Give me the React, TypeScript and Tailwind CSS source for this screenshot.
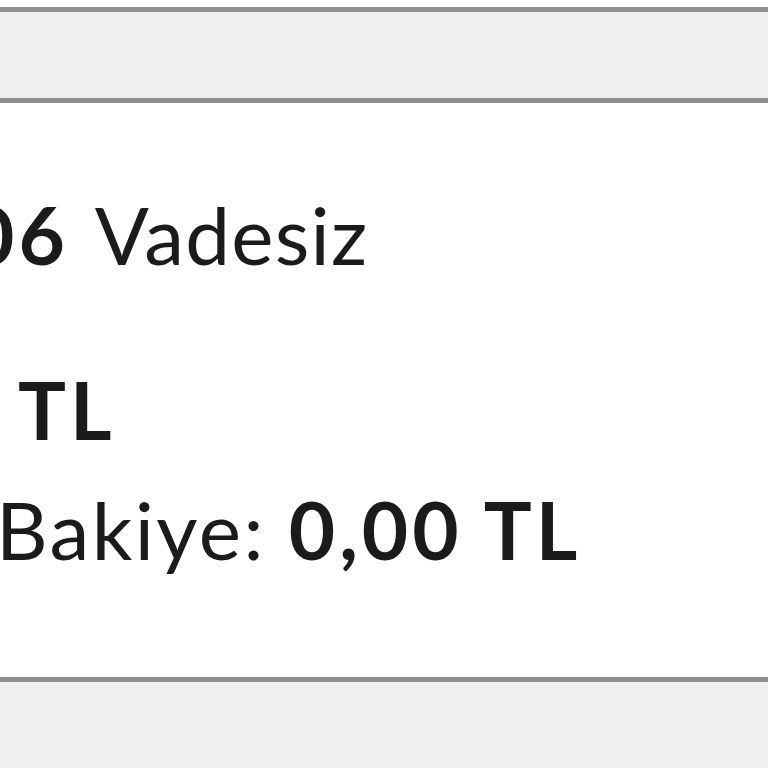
export default function App() {
  return (
    <div className="w-[768px] h-[768px] overflow-hidden bg-white text-[#1b1b1b]" style={{ fontFamily: 'Lato, "Noto Sans", sans-serif' }}>
      {/* top strip */}
      <div className="h-[7px] bg-white" />
      <div className="h-[96px] bg-[#efefef] border-y-[5px] border-[#8f8f8f]" />

      {/* account card */}
      <div className="h-[574px] pt-[91px] text-[80px] leading-[80px] whitespace-nowrap tracking-[0.03em]">
        <div className="ml-[-32px] flex gap-[26px]">
          <span className="font-bold tracking-[0.05em]">06</span>
          <span className="tracking-[0.015em]">Vadesiz</span>
        </div>
        <div className="mt-[95px] ml-[-177px] font-bold tracking-[0.05em]">0,00 TL</div>
        <div className="mt-[40px] ml-[-4px]">
          Bakiye: <span className="font-bold tracking-[0.05em]">0,00 TL</span>
        </div>
      </div>

      <div className="h-[91px] bg-[#efefef] border-t-[5px] border-[#8f8f8f]" />
    </div>
  )
}
